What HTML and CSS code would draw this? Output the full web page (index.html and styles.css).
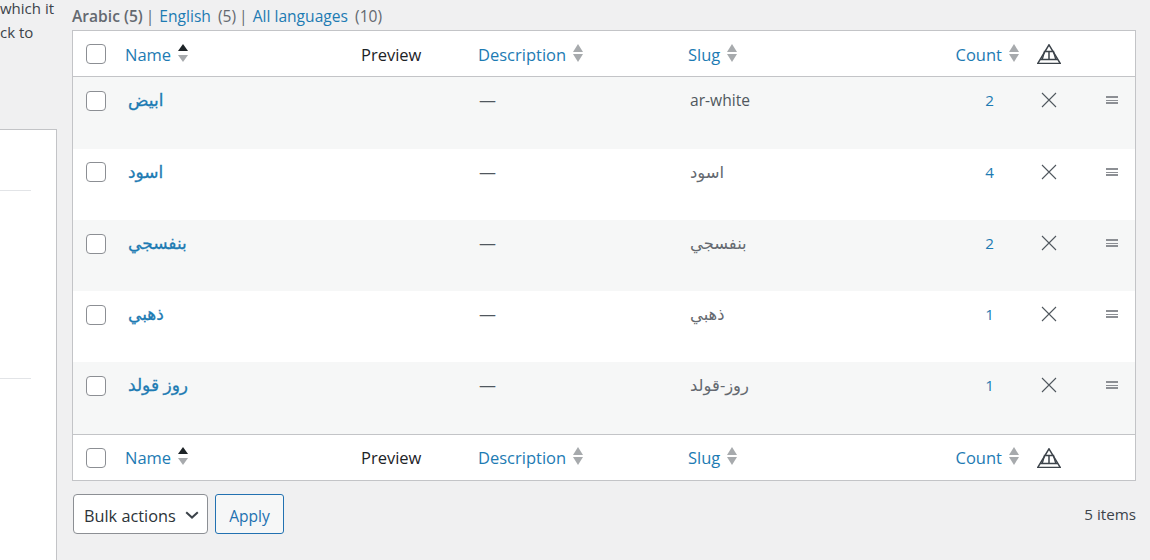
FILE: index.html
```html
<!DOCTYPE html>
<html lang="en">
<head>
<meta charset="utf-8">
<title>Terms</title>
<link rel="stylesheet" href="styles.css">
</head>
<body>
<svg class="defs" width="0" height="0" aria-hidden="true">
  <symbol id="flag" viewBox="0 0 24 20">
    <path d="M12 .8 23.2 19.4H.8Z M3.4 15.5H20.6 M6.8 7.5H17.2 M12 7.5V15.5" fill="none" stroke="#3c434a" stroke-width="1.5"/>
    <path d="M7.4 8 5.2 15.5 M16.6 8 18.8 15.5" fill="none" stroke="#3c434a" stroke-width="1.3"/>
  </symbol>
  <symbol id="close" viewBox="0 0 16 16">
    <path d="M1 1 15 15 M15 1 1 15" fill="none" stroke="#50575e" stroke-width="1.1"/>
  </symbol>
</svg>
<div class="page">
  <aside class="side">
    <p class="side-text">which it<br>ck to</p>
    <div class="side-card">
      <div class="side-rule first"></div>
      <div class="side-rule second"></div>
    </div>
  </aside>
  <main class="main">
    <ul class="subsub">
      <li class="current">Arabic (5)</li><li class="sep">|</li>
      <li><a>English</a> <span class="num">(5)</span></li><li class="sep">|</li>
      <li><a>All languages</a> <span class="num">(10)</span></li>
    </ul>
    <table class="terms">
      <colgroup>
        <col class="c-cb"><col class="c-name"><col class="c-preview"><col class="c-desc"><col class="c-slug"><col class="c-count"><col class="c-flag"><col class="c-handle">
      </colgroup>
      <thead>
        <tr>
          <th><span class="check"></span></th>
          <th><a class="col">Name<span class="sort asc"></span></a></th>
          <th class="plain">Preview</th>
          <th><a class="col">Description<span class="sort"></span></a></th>
          <th><a class="col">Slug<span class="sort"></span></a></th>
          <th class="right"><a class="col">Count<span class="sort"></span></a></th>
          <th class="mid"><svg class="flag"><use href="#flag"/></svg></th>
          <th></th>
        </tr>
      </thead>
      <tbody>
        <tr class="alt"><td><span class="check"></span></td><td class="name"><a>ابيض</a></td><td></td><td class="dash">—</td><td class="slug">ar-white</td><td class="right"><a>2</a></td><td class="mid"><svg class="x"><use href="#close"/></svg></td><td class="drag"><span class="handle"></span></td></tr>
        <tr><td><span class="check"></span></td><td class="name"><a>اسود</a></td><td></td><td class="dash">—</td><td class="ar">اسود</td><td class="right"><a>4</a></td><td class="mid"><svg class="x"><use href="#close"/></svg></td><td class="drag"><span class="handle"></span></td></tr>
        <tr class="alt"><td><span class="check"></span></td><td class="name"><a>بنفسجي</a></td><td></td><td class="dash">—</td><td class="ar">بنفسجي</td><td class="right"><a>2</a></td><td class="mid"><svg class="x"><use href="#close"/></svg></td><td class="drag"><span class="handle"></span></td></tr>
        <tr><td><span class="check"></span></td><td class="name"><a>ذهبي</a></td><td></td><td class="dash">—</td><td class="ar">ذهبي</td><td class="right"><a>1</a></td><td class="mid"><svg class="x"><use href="#close"/></svg></td><td class="drag"><span class="handle"></span></td></tr>
        <tr class="alt"><td><span class="check"></span></td><td class="name"><a>روز قولد</a></td><td></td><td class="dash">—</td><td class="ar">روز-قولد</td><td class="right"><a>1</a></td><td class="mid"><svg class="x"><use href="#close"/></svg></td><td class="drag"><span class="handle"></span></td></tr>
      </tbody>
      <tfoot>
        <tr>
          <th><span class="check"></span></th>
          <th><a class="col">Name<span class="sort asc"></span></a></th>
          <th class="plain">Preview</th>
          <th><a class="col">Description<span class="sort"></span></a></th>
          <th><a class="col">Slug<span class="sort"></span></a></th>
          <th class="right"><a class="col">Count<span class="sort"></span></a></th>
          <th class="mid"><svg class="flag"><use href="#flag"/></svg></th>
          <th></th>
        </tr>
      </tfoot>
    </table>
    <div class="tablenav">
      <div class="select">Bulk actions<svg class="chev" viewBox="0 0 14 8"><path d="M1.2 1.2 7 6.6 12.8 1.2" fill="none" stroke="#3c434a" stroke-width="2"/></svg></div>
      <div class="apply">Apply</div>
      <div class="items">5 items</div>
    </div>
  </main>
</div>
</body>
</html>
```

FILE: styles.css
```css
* { box-sizing: border-box; }
html, body { margin: 0; height: 100%; }
body {
  background: #f0f0f1;
  color: #3c434a;
  font-family: "Open Sans", "Noto Sans", "DejaVu Sans", sans-serif;
  font-size: 15.2px;
  overflow: hidden;
}
.defs { position: absolute; }
a { color: #1d7bb3; text-decoration: none; }
.page { display: flex; height: 560px; }
.side {
  width: 57px;
  flex: none;
  display: flex;
  flex-direction: column;
}
.side-text {
  margin: -4px 0 0;
  flex: none;
  font-size: 15px;
  line-height: 24px;
  height: 133px;
  white-space: nowrap;
}
.side-card {
  flex: 1;
  width: 100%;
  background: #fff;
  border-top: 1px solid #c3c4c7;
  border-right: 1px solid #c3c4c7;
  padding-top: 60px;
}
.side-rule { width: 31px; border-top: 1px solid #e2e4e7; }
.side-rule.second { margin-top: 187px; }
.main { flex: none; width: 1064px; margin-left: 15px; }
.subsub {
  list-style: none;
  margin: 0;
  padding: 6px 0 0;
  height: 30px;
  display: flex;
  font-size: 15.6px;
  line-height: 20px;
  color: #646970;
}
.subsub .current { font-weight: 600; }
.subsub .sep { margin: 0 5px 0 3px; }
.num { margin-left: 3px; }
.terms {
  width: 1064px;
  table-layout: fixed;
  border-collapse: separate;
  border-spacing: 0;
  background: #fff;
  border: 1px solid #c3c4c7;
}
.c-cb { width: 42px; }
.c-name { width: 236px; }
.c-preview { width: 117px; }
.c-desc { width: 210px; }
.c-slug { width: 240px; }
.c-count { width: 111px; }
.c-flag { width: 39px; }
th {
  height: 46px;
  padding: 0 10px;
  text-align: left;
  font-weight: 400;
  font-size: 16.5px;
  vertical-align: middle;
  white-space: nowrap;
}
thead th { border-bottom: 1px solid #c3c4c7; padding-top: 2px; }
tfoot th { border-top: 1px solid #c3c4c7; }
th.plain { color: #1d2327; }
th:first-child, td:first-child { padding: 0 0 0 13px; }
.col { display: inline-flex; align-items: center; gap: 7px; }
td {
  height: 71px;
  padding: 12px 12px 0;
  vertical-align: top;
  line-height: 22px;
}
tbody tr:first-child td, tbody tr:last-child td { height: 72px; }
td:first-child { padding-top: 14px; }
tbody tr:nth-child(2) td:first-child { padding-top: 13px; }
.alt td { background: #f6f7f7; }
td.name { font-size: 17px; padding-left: 13px; -webkit-text-stroke: 0.3px #1d7bb3; }
td.slug { font-size: 15.6px; color: #50575e; }
td.ar { font-size: 16.4px; color: #646970; }
td.dash { font-size: 17px; padding-left: 11px; color: #50575e; }
.right { text-align: right; }
th.right { padding-right: 10px; }
td.right { padding-right: 35px; }
.mid { text-align: center; padding-left: 0; padding-right: 0; }
th.mid { padding: 0; }
.check {
  display: block;
  width: 20px;
  height: 20px;
  background: #fff;
  border: 1px solid #8c8f94;
  border-radius: 4px;
}
.sort {
  display: flex;
  flex-direction: column;
  gap: 2px;
  margin-top: -4px;
}
.sort::before, .sort::after {
  content: "";
  width: 0;
  height: 0;
  border-left: 5.5px solid transparent;
  border-right: 5.5px solid transparent;
}
.sort::before { border-bottom: 8px solid #a7aaad; }
.sort::after { border-top: 8px solid #a7aaad; }
.sort.asc { gap: 4px; }
.sort.asc::before { border-bottom: 7px solid #1d2327; }
.sort.asc::after { border-top-width: 7px; }
.flag { display: block; width: 24px; height: 20px; margin: 0 auto; }
.x { display: block; width: 16px; height: 16px; margin: 3px auto 0; }
td.drag { padding: 12px 0 0 38px; }
.handle {
  display: block;
  width: 12px;
  height: 8px;
  margin-top: 7px;
  border-top: 2px solid #8c8f94;
  border-bottom: 2px solid #8c8f94;
  background: linear-gradient(#8c8f94, #8c8f94) center / 100% 1px no-repeat;
}
.tablenav {
  display: flex;
  align-items: center;
  margin-top: 13px;
  padding-left: 1px;
  height: 40px;
}
.select {
  width: 135px;
  height: 40px;
  background: #fff;
  border: 1px solid #8c8f94;
  border-radius: 4px;
  color: #2c3338;
  font-size: 16.3px;
  padding: 4px 8px 0 10px;
  display: flex;
  align-items: center;
  justify-content: space-between;
}
.chev { width: 14px; height: 8px; margin-top: -2px; }
.apply {
  width: 69px;
  height: 40px;
  margin-left: 7px;
  padding-top: 4px;
  background: #f6f7f7;
  border: 1px solid #2271b1;
  border-radius: 3px;
  color: #2271b1;
  font-size: 15.6px;
  display: flex;
  align-items: center;
  justify-content: center;
}
.items { margin-left: auto; }
```
